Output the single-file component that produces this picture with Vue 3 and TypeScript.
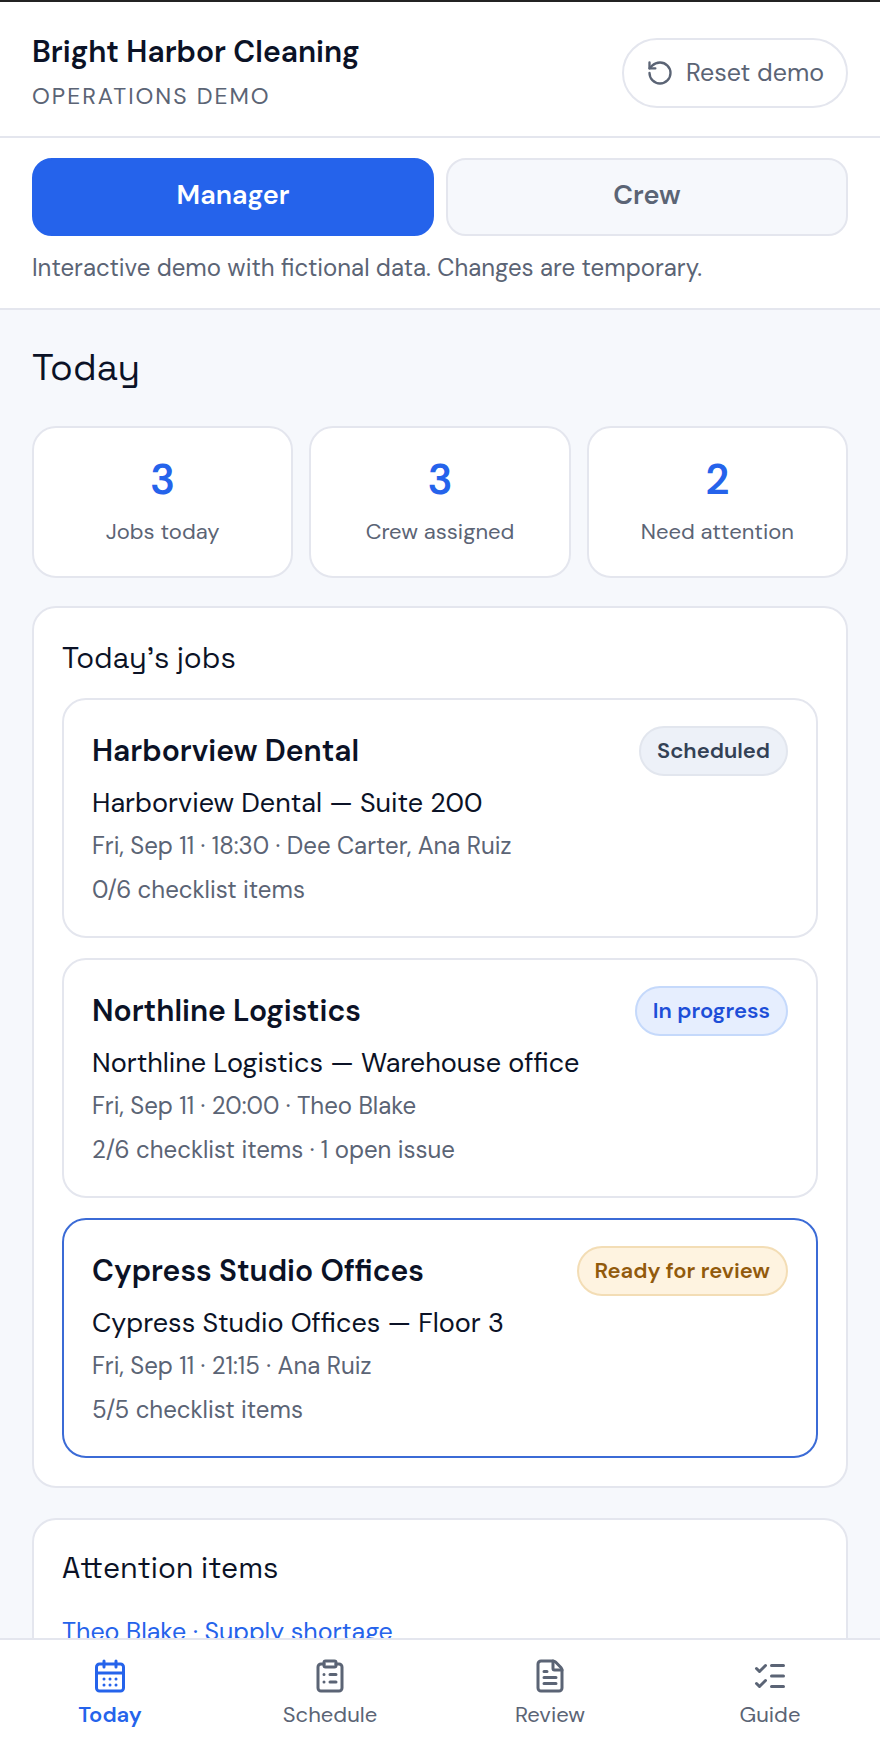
<script setup lang="ts">
import { ref } from 'vue'

type Tone = 'neutral' | 'info' | 'warning'

interface Job {
  id: number
  client: string
  site: string
  schedule: string
  progress: string
  status: string
  tone: Tone
}

const roles = ['Manager', 'Crew']
const activeRole = ref('Manager')

const stats = [
  { value: 3, label: 'Jobs today' },
  { value: 3, label: 'Crew assigned' },
  { value: 2, label: 'Need attention' },
]

const jobs: Job[] = [
  {
    id: 1,
    client: 'Harborview Dental',
    site: 'Harborview Dental — Suite 200',
    schedule: 'Fri, Sep 11 · 18:30 · Dee Carter, Ana Ruiz',
    progress: '0/6 checklist items',
    status: 'Scheduled',
    tone: 'neutral',
  },
  {
    id: 2,
    client: 'Northline Logistics',
    site: 'Northline Logistics — Warehouse office',
    schedule: 'Fri, Sep 11 · 20:00 · Theo Blake',
    progress: '2/6 checklist items · 1 open issue',
    status: 'In progress',
    tone: 'info',
  },
  {
    id: 3,
    client: 'Cypress Studio Offices',
    site: 'Cypress Studio Offices — Floor 3',
    schedule: 'Fri, Sep 11 · 21:15 · Ana Ruiz',
    progress: '5/5 checklist items',
    status: 'Ready for review',
    tone: 'warning',
  },
]
const selectedJob = ref(3)

const tabs = [
  {
    name: 'Today',
    paths: [
      'M8 2v4M16 2v4',
      'M5 4h14a2 2 0 0 1 2 2v14a2 2 0 0 1-2 2H5a2 2 0 0 1-2-2V6a2 2 0 0 1 2-2z',
      'M3 10h18',
      'M8 14h.01M12 14h.01M16 14h.01M8 18h.01M12 18h.01M16 18h.01',
    ],
  },
  {
    name: 'Schedule',
    paths: [
      'M9 2h6a1 1 0 0 1 1 1v2a1 1 0 0 1-1 1H9a1 1 0 0 1-1-1V3a1 1 0 0 1 1-1z',
      'M16 4h2a2 2 0 0 1 2 2v14a2 2 0 0 1-2 2H6a2 2 0 0 1-2-2V6a2 2 0 0 1 2-2h2',
      'M12 11h4M12 16h4M8 11h.01M8 16h.01',
    ],
  },
  {
    name: 'Review',
    paths: [
      'M6 22a2 2 0 0 1-2-2V4a2 2 0 0 1 2-2h8a2.4 2.4 0 0 1 1.704.706l3.588 3.588A2.4 2.4 0 0 1 20 8v12a2 2 0 0 1-2 2z',
      'M14 2v5a1 1 0 0 0 1 1h5',
      'M10 9H8M16 13H8M16 17H8',
    ],
  },
  {
    name: 'Guide',
    paths: ['M13 5h8M13 12h8M13 19h8', 'm3 17 2 2 4-4', 'm3 7 2 2 4-4'],
  },
]
const activeTab = ref('Today')

function resetDemo() {
  activeRole.value = 'Manager'
  activeTab.value = 'Today'
  selectedJob.value = 3
}
</script>

<template>
  <div class="app">
    <header class="topbar">
      <div>
        <div class="brand">Bright Harbor Cleaning</div>
        <div class="tagline">OPERATIONS DEMO</div>
      </div>
      <button type="button" class="reset" @click="resetDemo">
        <svg class="reset-icon" viewBox="0 0 24 24" aria-hidden="true">
          <path d="M3 12a9 9 0 1 0 9-9 9.75 9.75 0 0 0-6.74 2.74L3 8" />
          <path d="M3 3v5h5" />
        </svg>
        Reset demo
      </button>
    </header>

    <section class="roles">
      <div class="role-buttons">
        <button
          v-for="role in roles"
          :key="role"
          type="button"
          class="role"
          :class="{ active: role === activeRole }"
          :aria-pressed="role === activeRole"
          @click="activeRole = role"
        >
          {{ role }}
        </button>
      </div>
      <p class="notice">Interactive demo with fictional data. Changes are temporary.</p>
    </section>

    <main class="content">
      <h1 class="page-title">Today</h1>

      <div class="stats">
        <div v-for="stat in stats" :key="stat.label" class="stat">
          <span class="stat-value">{{ stat.value }}</span>
          <span class="stat-label">{{ stat.label }}</span>
        </div>
      </div>

      <section class="panel">
        <h2 class="panel-title">Today’s jobs</h2>
        <div class="jobs">
          <button
            v-for="job in jobs"
            :key="job.id"
            type="button"
            class="job"
            :class="{ selected: job.id === selectedJob }"
            @click="selectedJob = job.id"
          >
            <span class="job-head">
              <span class="client">{{ job.client }}</span>
              <span class="pill" :class="job.tone">{{ job.status }}</span>
            </span>
            <span class="site">{{ job.site }}</span>
            <span class="meta">{{ job.schedule }}</span>
            <span class="meta">{{ job.progress }}</span>
          </button>
        </div>
      </section>

      <section class="panel attention">
        <h2 class="panel-title">Attention items</h2>
        <a class="issue" href="#supply-shortage">Theo Blake · Supply shortage</a>
      </section>
    </main>

    <nav class="tabbar" aria-label="Main">
      <button
        v-for="tab in tabs"
        :key="tab.name"
        type="button"
        class="tab"
        :class="{ active: tab.name === activeTab }"
        @click="activeTab = tab.name"
      >
        <svg class="tab-icon" viewBox="0 0 24 24" aria-hidden="true">
          <path v-for="d in tab.paths" :key="d" :d="d" />
        </svg>
        {{ tab.name }}
      </button>
    </nav>
  </div>
</template>

<style>
body {
  margin: 0;
  background: #f6f8fc;
}
</style>

<style scoped>
.app {
  --ink: #0b1226;
  --muted: #5b6475;
  --line: #e4e6ee;
  --blue: #2563eb;
  display: flex;
  flex-direction: column;
  box-sizing: border-box;
  height: 100vh;
  border-top: 2px solid #232323;
  background: #f6f8fc;
  color: var(--ink);
  font-family: 'DM Sans', Inter, 'Liberation Sans', sans-serif;
  font-size: 25px;
  line-height: 44px;
}

.app * {
  box-sizing: border-box;
}

button {
  margin: 0;
  font: inherit;
  color: inherit;
  cursor: pointer;
}

svg {
  fill: none;
  stroke: currentColor;
  stroke-width: 2;
  stroke-linecap: round;
  stroke-linejoin: round;
}

.topbar {
  display: flex;
  align-items: center;
  justify-content: space-between;
  padding: 27px 32px 19px;
  border-bottom: 2px solid var(--line);
  background: #fff;
}

.brand {
  font-size: 30px;
  font-weight: 600;
  line-height: 46px;
}

.tagline {
  color: var(--muted);
  font-size: 23px;
  line-height: 42px;
  letter-spacing: 2px;
}

.reset {
  display: flex;
  align-items: center;
  gap: 12px;
  height: 70px;
  padding: 0 22px;
  border: 2px solid var(--line);
  border-radius: 35px;
  background: #fff;
  color: var(--muted);
}

.reset-icon {
  width: 28px;
  height: 28px;
}

.roles {
  padding: 20px 32px 18px;
  border-bottom: 2px solid var(--line);
  background: #fff;
}

.role-buttons {
  display: grid;
  grid-template-columns: 1fr 1fr;
  gap: 12px;
}

.role {
  height: 78px;
  padding: 0 0 4px;
  border: 2px solid var(--line);
  border-radius: 20px;
  background: #f6f8fc;
  color: var(--muted);
  font-size: 27px;
  font-weight: 600;
}

.role.active {
  border-color: var(--blue);
  background: var(--blue);
  color: #fff;
}

.notice {
  margin: 10px 0 0;
  color: var(--muted);
  font-size: 24px;
}

.content {
  flex: 1;
  min-height: 0;
  padding: 32px 32px 0;
  overflow-y: auto;
  scrollbar-width: none;
}

.page-title,
.panel-title {
  font-family: 'Space Grotesk', 'DM Sans', Inter, 'Liberation Sans', sans-serif;
  font-weight: 400;
}

.page-title {
  margin: 0 0 32px;
  font-size: 37px;
  line-height: 52px;
}

.stats {
  display: grid;
  grid-template-columns: repeat(3, 1fr);
  gap: 16px;
}

.stat {
  display: flex;
  flex-direction: column;
  align-items: center;
  gap: 4px;
  padding: 26px 16px 22px;
  border: 2px solid var(--line);
  border-radius: 24px;
  background: #fff;
}

.stat-value {
  color: var(--blue);
  font-size: 42px;
  font-weight: 600;
  line-height: 52px;
}

.stat-label {
  color: var(--muted);
  font-size: 22px;
}

.panel {
  margin-top: 28px;
  padding: 28px;
  border: 2px solid var(--line);
  border-radius: 24px;
  background: #fff;
}

.attention {
  margin-top: 30px;
  padding-top: 26px;
}

.panel-title {
  margin: 0 0 18px;
  font-size: 29px;
  line-height: 44px;
}

.attention .panel-title {
  margin-bottom: 20px;
}

.jobs {
  display: flex;
  flex-direction: column;
  gap: 20px;
}

.job {
  display: flex;
  flex-direction: column;
  padding: 26px 28px 24px;
  border: 2px solid var(--line);
  border-radius: 24px;
  background: #fff;
  text-align: left;
}

.job.selected {
  border-color: #3b6bd6;
}

.job-head {
  display: flex;
  align-items: center;
  justify-content: space-between;
  gap: 16px;
  margin-bottom: 6px;
}

.client {
  font-size: 30px;
  font-weight: 600;
}

.pill {
  padding: 0 16px;
  border: 2px solid;
  border-radius: 25px;
  font-size: 22px;
  font-weight: 600;
  line-height: 46px;
  white-space: nowrap;
}

.pill.neutral {
  border-color: #e2e6ee;
  background: #edf1f8;
  color: #334155;
}

.pill.info {
  border-color: #c5d9fb;
  background: #e6eefe;
  color: #1d4ed8;
}

.pill.warning {
  border-color: #f3ddb5;
  background: #fef3e0;
  color: #925a0c;
}

.site {
  font-size: 27px;
  line-height: 42px;
}

.meta {
  color: var(--muted);
  font-size: 24px;
}

.issue {
  color: var(--blue);
  text-decoration: none;
}

.tabbar {
  display: grid;
  grid-template-columns: repeat(4, 1fr);
  border-top: 2px solid var(--line);
  background: #fff;
}

.tab {
  display: flex;
  flex-direction: column;
  align-items: center;
  gap: 5px;
  padding: 18px 0 19px;
  border: 0;
  background: none;
  color: var(--muted);
  font-size: 22px;
  line-height: 32px;
}

.tab.active {
  color: var(--blue);
  font-weight: 600;
}

.tab-icon {
  width: 36px;
  height: 36px;
}
</style>
